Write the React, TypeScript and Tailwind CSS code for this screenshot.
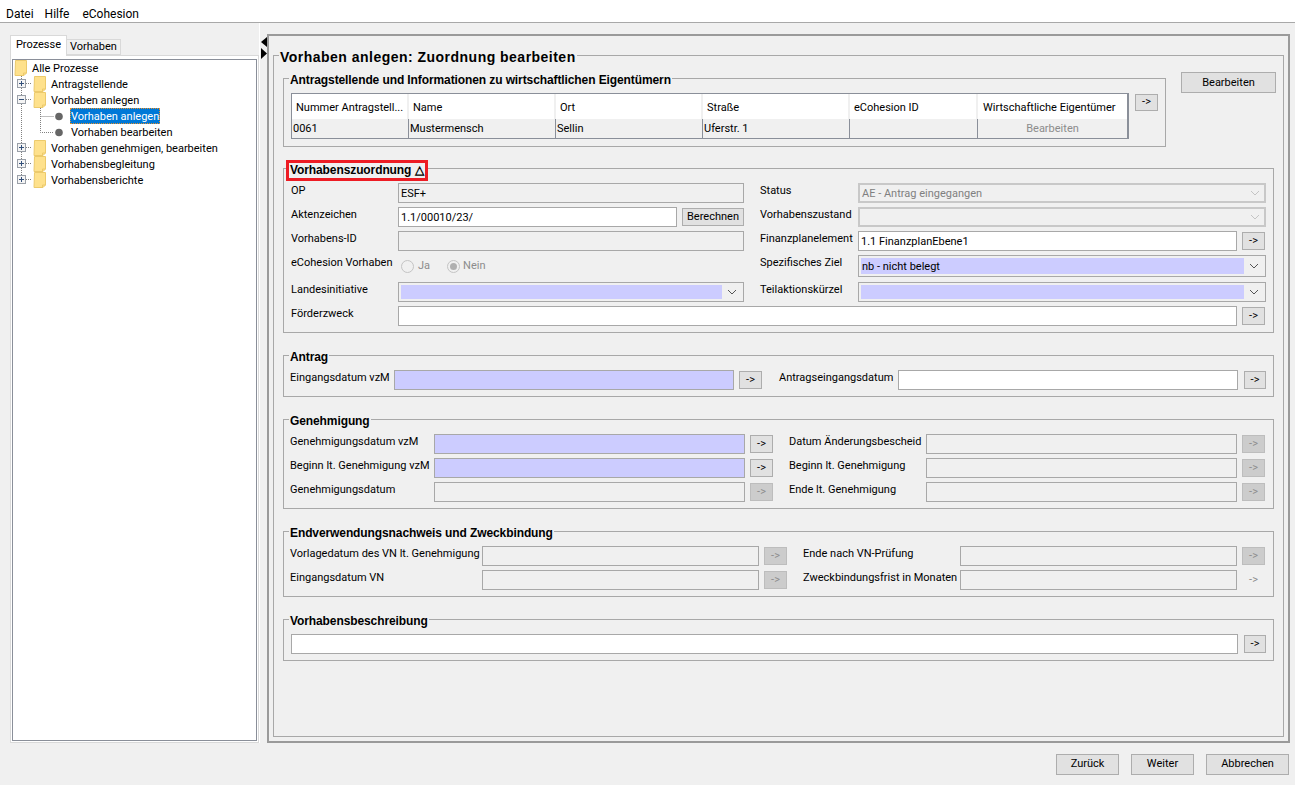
import type { ReactNode } from "react";

type Tone = "white" | "blue" | "off";

const toneBg: Record<Tone, string> = {
  white: "bg-white",
  blue: "bg-[#ccccff]",
  off: "bg-[#f0f0f0]",
};

function Lbl({ w, children }: { w: string; children: ReactNode }) {
  return <div className={`${w} shrink-0 whitespace-nowrap leading-[16px]`}>{children}</div>;
}

function Field({ w, tone = "off", children }: { w: string; tone?: Tone; children?: ReactNode }) {
  return (
    <div className={`${w} ${toneBg[tone]} flex h-[20px] shrink-0 items-center border border-[#a8a8a8] pl-[2px] pt-[2px]`}>
      {children}
    </div>
  );
}

function Chevron({ off }: { off?: boolean }) {
  return (
    <svg width="10" height="6" viewBox="0 0 10 6" className="shrink-0">
      <path d="M1 1l4 4 4-4" fill="none" stroke={off ? "#c4c4c4" : "#555"} strokeWidth="1" />
    </svg>
  );
}

function Combo({ w, tone, h = "h-[20px]", text }: { w: string; tone: Tone; h?: string; text?: string }) {
  const off = tone === "off";
  return (
    <div
      className={`${w} ${h} flex shrink-0 items-center ${
        off ? "border-2 border-[#c8c8c8] pl-[1px] pt-[1px] pb-[1px]" : "border border-[#a8a8a8] p-[2px]"
      }`}
    >
      <div className={`${toneBg[tone]} flex h-full flex-1 items-center pl-[1px] pt-[2px] ${off ? "text-[#808080]" : ""}`}>{text}</div>
      <div className="flex w-[19px] justify-center">
        <Chevron off={off} />
      </div>
    </div>
  );
}

function ArrowBtn({ w = "w-[23px]", off, flat }: { w?: string; off?: boolean; flat?: boolean }) {
  const look = flat
    ? "text-[#8c8c8c]"
    : off
      ? "border border-[#bdbdbd] bg-[#cccccc] text-[#8c8c8c]"
      : "border border-[#adadad] bg-[#e1e1e1] text-black";
  return <div className={`${w} ${look} flex h-[18px] shrink-0 items-center justify-center`}>{"->"}</div>;
}

function Row({ children, className = "" }: { children: ReactNode; className?: string }) {
  return <div className={`flex items-start ${className}`}>{children}</div>;
}

function Slot({ w, children }: { w: string; children: ReactNode }) {
  return <div className={`${w} flex h-[20px] shrink-0 items-center justify-end`}>{children}</div>;
}

const boldFont = { fontFamily: '"Liberation Sans", Arial, sans-serif' };

function Group({ title, className, children }: { title: string; className: string; children: ReactNode }) {
  return (
    <fieldset className={`min-w-0 border border-[#a8a8a8] ${className}`}>
      <legend className="ml-[5px] px-[1px] pt-[4px] text-[12px] font-bold leading-[12px] tracking-[-0.1px]" style={boldFont}>
        {title}
      </legend>
      {children}
    </fieldset>
  );
}

function Folder() {
  return (
    <>
      <path d="M.5.5h11v12.5l-2.5 2.5h-9z" fill="#fee18c" stroke="#ecca6c" />
      <path d="M11.5 13h-3v2.5" fill="none" stroke="#ecca6c" />
    </>
  );
}

function Expander({ open }: { open?: boolean }) {
  return (
    <g>
      <rect x="4.5" y="3.5" width="8" height="8" fill="#f4f4f4" stroke="#9aa0a8" />
      <path d="M6 7.5h5" stroke="#33507a" />
      {!open && <path d="M8.5 5v5" stroke="#33507a" />}
    </g>
  );
}

const dots = { stroke: "#808080", strokeDasharray: "1 1", fill: "none" };

function TreeChild({ label, open, last }: { label: string; open?: boolean; last?: boolean }) {
  return (
    <div className="flex h-[16px] items-center">
      <svg width="38" height="16" className="shrink-0">
        <path d={last ? "M8.5 0v3" : "M8.5 0v3M8.5 12v4"} {...dots} />
        <path d="M13 7.5h6" {...dots} />
        <Expander open={open} />
        <g transform="translate(21 0)">
          <Folder />
        </g>
      </svg>
      <span className="whitespace-nowrap pt-[2px]">{label}</span>
    </div>
  );
}

function TreeLeaf({ label, selected, last }: { label: string; selected?: boolean; last?: boolean }) {
  return (
    <div className="flex h-[16px] items-center">
      <svg width="57" height="16" className="shrink-0">
        <path d="M8.5 0v16" {...dots} />
        <path d={last ? "M27.5 0v8.5h13" : "M27.5 0v16M27.5 8.5h13"} {...dots} />
        <circle cx="46" cy="8.5" r="3.8" fill="#666666" />
      </svg>
      <span
        className={`whitespace-nowrap ${
          selected
            ? "h-[16px] w-[90px] border border-dotted border-[#e8912a] bg-[#0078d7] leading-[15px] text-white"
            : "pl-[1px] pt-[2px]"
        }`}
      >
        {label}
      </span>
    </div>
  );
}

const columns = [
  { w: "w-[117px]", head: "Nummer Antragstell...", cell: "0061" },
  { w: "w-[147px]", head: "Name", cell: "Mustermensch" },
  { w: "w-[147px]", head: "Ort", cell: "Sellin" },
  { w: "w-[147px]", head: "Straße", cell: "Uferstr. 1" },
  { w: "w-[128px]", head: "eCohesion ID", cell: "" },
];

function FooterBtn({ w, label }: { w: string; label: string }) {
  return (
    <div className={`${w} flex h-[21px] items-center justify-center border border-[#adadad] bg-[#e1e1e1]`}>{label}</div>
  );
}

export default function App() {
  return (
    <div
      className="flex h-[785px] w-[1295px] flex-col overflow-hidden bg-[#f0f0f0] text-[11px] text-black"
      style={{ fontFamily: 'Roboto, "Liberation Sans", Arial, sans-serif' }}
    >
      <div className="flex h-[23px] shrink-0 items-center border-b border-[#a8a8a8] bg-white pl-[6px] pt-[6px] text-[12px]">
        <span>Datei</span>
        <span className="ml-[11px]">Hilfe</span>
        <span className="ml-[13px]">eCohesion</span>
      </div>

      <div className="flex h-[720px] shrink-0">
        {/* left tabs + tree */}
        <div className="flex w-[259px] shrink-0 flex-col pl-[10px] pt-[12px]">
          <div className="relative z-10 -mb-px flex h-[21px] items-end">
            <div className="flex h-[21px] w-[57px] justify-center border border-b-0 border-[#d9d9d9] bg-white pt-[1px] leading-[16px]">
              Prozesse
            </div>
            <div className="mb-px flex h-[16px] w-[54px] items-center justify-center border border-l-0 border-[#d9d9d9] bg-[#f0f0f0] pt-[1px]">
              Vorhaben
            </div>
          </div>
          <div className="flex flex-1 flex-col border border-[#d9d9d9] bg-white px-[1px] pb-[1px] pt-[3px]">
            <div className="flex-1 border border-[#8a8f99] bg-white">
              <div className="flex h-[16px] items-center">
                <svg width="19" height="16" className="shrink-0">
                  <g transform="translate(2 0)">
                    <Folder />
                  </g>
                </svg>
                <span className="pt-[2px]">Alle Prozesse</span>
              </div>
              <TreeChild label="Antragstellende" />
              <TreeChild label="Vorhaben anlegen" open />
              <TreeLeaf label="Vorhaben anlegen" selected />
              <TreeLeaf label="Vorhaben bearbeiten" last />
              <TreeChild label="Vorhaben genehmigen, bearbeiten" />
              <TreeChild label="Vorhabensbegleitung" />
              <TreeChild label="Vorhabensberichte" last />
            </div>
          </div>
        </div>

        {/* splitter */}
        <div className="flex w-[8px] shrink-0 flex-col gap-[1px] border-l border-white pl-[1px] pt-[14px]">
          <svg width="6" height="10" viewBox="0 0 6 10">
            <path d="M6 0v10L0 5z" fill="#000" />
          </svg>
          <svg width="6" height="11" viewBox="0 0 6 11">
            <path d="M0 0v11l6-5.5z" fill="#000" />
          </svg>
        </div>

        {/* main panel */}
        <div className="mt-[11px] h-[709px] w-[1023px] shrink-0 border-2 border-[#9a9a9a] pl-[4px] pt-[9px]">
          <fieldset className="h-[692px] w-[1011px] border border-[#a8a8a8]">
            <legend className="ml-[5px] px-[1px] pt-[4px] text-[14px] font-bold leading-[16px] tracking-[0.48px]" style={boldFont}>
              Vorhaben anlegen: Zuordnung bearbeiten
            </legend>
            <div className="pl-[9px] pt-[5px]">
              <div className="flex items-start">
                <Group title="Antragstellende und Informationen zu wirtschaftlichen Eigentümern" className="w-[883px]">
                  <div className="flex items-start pb-[7px] pl-[7px] pt-[7px]">
                    <div className="h-[46px] w-[838px] border border-b-2 border-r-2 border-[#8a8f99]">
                      <div className="flex h-[25px] bg-white">
                        {columns.map((c) => (
                          <div key={c.head} className={`${c.w} flex items-center border-r-2 border-[#f0f0f0] pl-[4px] pt-[4px]`}>
                            {c.head}
                          </div>
                        ))}
                        <div className="flex flex-1 items-center pl-[5px] pt-[4px]">Wirtschaftliche Eigentümer</div>
                      </div>
                      <div className="flex h-[19px] bg-[#f0f0f0]">
                        {columns.map((c) => (
                          <div key={c.head} className={`${c.w} flex items-center border-r border-[#8a8f99] pl-[1px] pt-[2px]`}>
                            {c.cell}
                          </div>
                        ))}
                        <div className="flex flex-1 items-center justify-center pt-[2px] text-[#8c8c8c]">Bearbeiten</div>
                      </div>
                    </div>
                    <div className="ml-[6px] mt-[1px] flex h-[17px] w-[23px] items-center justify-center border border-[#adadad] bg-[#e1e1e1]">
                      {"->"}
                    </div>
                  </div>
                </Group>
                <div className="ml-[15px] mt-[2px] flex h-[21px] w-[95px] items-center justify-center border border-[#adadad] bg-[#e1e1e1] pt-[1px]">
                  Bearbeiten
                </div>
              </div>

              <fieldset className="mt-[13px] w-[991px] min-w-0 border border-[#a8a8a8]">
                <legend className="ml-[2px] h-[16px]">
                  <div
                    className="h-[21px] border-[3px] border-[#ed1c24] pl-[1px] pr-[2px] text-[12px] font-bold leading-[15px] tracking-[-0.1px]"
                    style={boldFont}
                  >
                    Vorhabenszuordnung △
                  </div>
                </legend>
                <div className="flex flex-col gap-[4px] pb-[6px] pl-[7px] pt-[7px]">
                  <Row>
                    <Lbl w="w-[107px]">OP</Lbl>
                    <Field w="w-[346px]">ESF+</Field>
                    <div className="w-[16px]" />
                    <Lbl w="w-[98px]">Status</Lbl>
                    <Combo w="w-[408px]" tone="off" text="AE - Antrag eingegangen" />
                  </Row>
                  <Row>
                    <Lbl w="w-[107px]">Aktenzeichen</Lbl>
                    <Field w="w-[279px]" tone="white">
                      1.1/00010/23/
                    </Field>
                    <div className="ml-[5px] mt-px flex h-[18px] w-[62px] shrink-0 items-center justify-center border border-[#adadad] bg-[#e1e1e1]">
                      Berechnen
                    </div>
                    <div className="w-[16px]" />
                    <Lbl w="w-[98px]">Vorhabenszustand</Lbl>
                    <Combo w="w-[408px]" tone="off" />
                  </Row>
                  <Row>
                    <Lbl w="w-[107px]">Vorhabens-ID</Lbl>
                    <Field w="w-[346px]" />
                    <div className="w-[16px]" />
                    <Lbl w="w-[98px]">Finanzplanelement</Lbl>
                    <Field w="w-[379px]" tone="white">
                      1.1 FinanzplanEbene1
                    </Field>
                    <Slot w="w-[28px]">
                      <ArrowBtn />
                    </Slot>
                  </Row>
                  <Row>
                    <Lbl w="w-[107px]">eCohesion Vorhaben</Lbl>
                    <div className="flex h-[22px] w-[346px] shrink-0 items-center pl-[3px] pt-[1px] text-[#8c8c8c]">
                      <span className="h-[13px] w-[13px] rounded-full border border-[#c4c4c4]" />
                      <span className="ml-[4px]">Ja</span>
                      <span className="ml-[17px] flex h-[13px] w-[13px] items-center justify-center rounded-full border border-[#c4c4c4]">
                        <span className="h-[7px] w-[7px] rounded-full bg-[#b0b0b0]" />
                      </span>
                      <span className="ml-[3px]">Nein</span>
                    </div>
                    <div className="w-[16px]" />
                    <Lbl w="w-[98px]">Spezifisches Ziel</Lbl>
                    <Combo w="w-[408px]" h="h-[22px]" tone="blue" text="nb - nicht belegt" />
                  </Row>
                  <Row className="mt-px">
                    <Lbl w="w-[107px]">Landesinitiative</Lbl>
                    <Combo w="w-[346px]" tone="blue" />
                    <div className="w-[16px]" />
                    <Lbl w="w-[98px]">Teilaktionskürzel</Lbl>
                    <Combo w="w-[408px]" tone="blue" />
                  </Row>
                  <Row>
                    <Lbl w="w-[107px]">Förderzweck</Lbl>
                    <Field w="w-[839px]" tone="white" />
                    <Slot w="w-[28px]">
                      <ArrowBtn />
                    </Slot>
                  </Row>
                </div>
              </fieldset>

              <Group title="Antrag" className="mt-[14px] w-[991px]">
                <Row className="pb-[6px] pl-[6px] pt-[7px]">
                  <Lbl w="w-[104px]">Eingangsdatum vzM</Lbl>
                  <Field w="w-[340px]" tone="blue" />
                  <Slot w="w-[28px]">
                    <ArrowBtn />
                  </Slot>
                  <div className="w-[17px]" />
                  <Lbl w="w-[119px]">Antragseingangsdatum</Lbl>
                  <Field w="w-[340px]" tone="white" />
                  <Slot w="w-[28px]">
                    <ArrowBtn w="w-[22px]" />
                  </Slot>
                </Row>
              </Group>

              <Group title="Genehmigung" className="mt-[14px] w-[991px]">
                <div className="flex flex-col gap-[4px] pb-[6px] pl-[6px] pt-[7px]">
                  <Row>
                    <Lbl w="w-[144px]">Genehmigungsdatum vzM</Lbl>
                    <Field w="w-[311px]" tone="blue" />
                    <Slot w="w-[28px]">
                      <ArrowBtn />
                    </Slot>
                    <div className="w-[16px]" />
                    <Lbl w="w-[137px]">Datum Änderungsbescheid</Lbl>
                    <Field w="w-[311px]" />
                    <Slot w="w-[28px]">
                      <ArrowBtn off />
                    </Slot>
                  </Row>
                  <Row>
                    <Lbl w="w-[144px]">Beginn lt. Genehmigung vzM</Lbl>
                    <Field w="w-[311px]" tone="blue" />
                    <Slot w="w-[28px]">
                      <ArrowBtn />
                    </Slot>
                    <div className="w-[16px]" />
                    <Lbl w="w-[137px]">Beginn lt. Genehmigung</Lbl>
                    <Field w="w-[311px]" />
                    <Slot w="w-[28px]">
                      <ArrowBtn off />
                    </Slot>
                  </Row>
                  <Row>
                    <Lbl w="w-[144px]">Genehmigungsdatum</Lbl>
                    <Field w="w-[311px]" />
                    <Slot w="w-[28px]">
                      <ArrowBtn off />
                    </Slot>
                    <div className="w-[16px]" />
                    <Lbl w="w-[137px]">Ende lt. Genehmigung</Lbl>
                    <Field w="w-[311px]" />
                    <Slot w="w-[28px]">
                      <ArrowBtn off />
                    </Slot>
                  </Row>
                </div>
              </Group>

              <Group title="Endverwendungsnachweis und Zweckbindung" className="mt-[14px] w-[991px]">
                <div className="flex flex-col gap-[4px] pb-[6px] pl-[6px] pt-[7px]">
                  <Row>
                    <Lbl w="w-[192px]">Vorlagedatum des VN lt. Genehmigung</Lbl>
                    <Field w="w-[277px]" />
                    <Slot w="w-[28px]">
                      <ArrowBtn off />
                    </Slot>
                    <div className="w-[16px]" />
                    <Lbl w="w-[157px]">Ende nach VN-Prüfung</Lbl>
                    <Field w="w-[277px]" />
                    <Slot w="w-[28px]">
                      <ArrowBtn off />
                    </Slot>
                  </Row>
                  <Row>
                    <Lbl w="w-[192px]">Eingangsdatum VN</Lbl>
                    <Field w="w-[277px]" />
                    <Slot w="w-[28px]">
                      <ArrowBtn off />
                    </Slot>
                    <div className="w-[16px]" />
                    <Lbl w="w-[157px]">Zweckbindungsfrist in Monaten</Lbl>
                    <Field w="w-[277px]" />
                    <Slot w="w-[28px]">
                      <ArrowBtn flat />
                    </Slot>
                  </Row>
                </div>
              </Group>

              <Group title="Vorhabensbeschreibung" className="mt-[14px] w-[991px]">
                <Row className="pb-[6px] pl-[7px] pt-[7px]">
                  <Field w="w-[947px]" tone="white" />
                  <Slot w="w-[28px]">
                    <ArrowBtn w="w-[22px]" />
                  </Slot>
                </Row>
              </Group>
            </div>
          </fieldset>
        </div>
      </div>

      <div className="flex justify-end gap-[12px] pr-[6px] pt-[11px]">
        <FooterBtn w="w-[63px]" label="Zurück" />
        <FooterBtn w="w-[63px]" label="Weiter" />
        <FooterBtn w="w-[83px]" label="Abbrechen" />
      </div>
    </div>
  );
}
